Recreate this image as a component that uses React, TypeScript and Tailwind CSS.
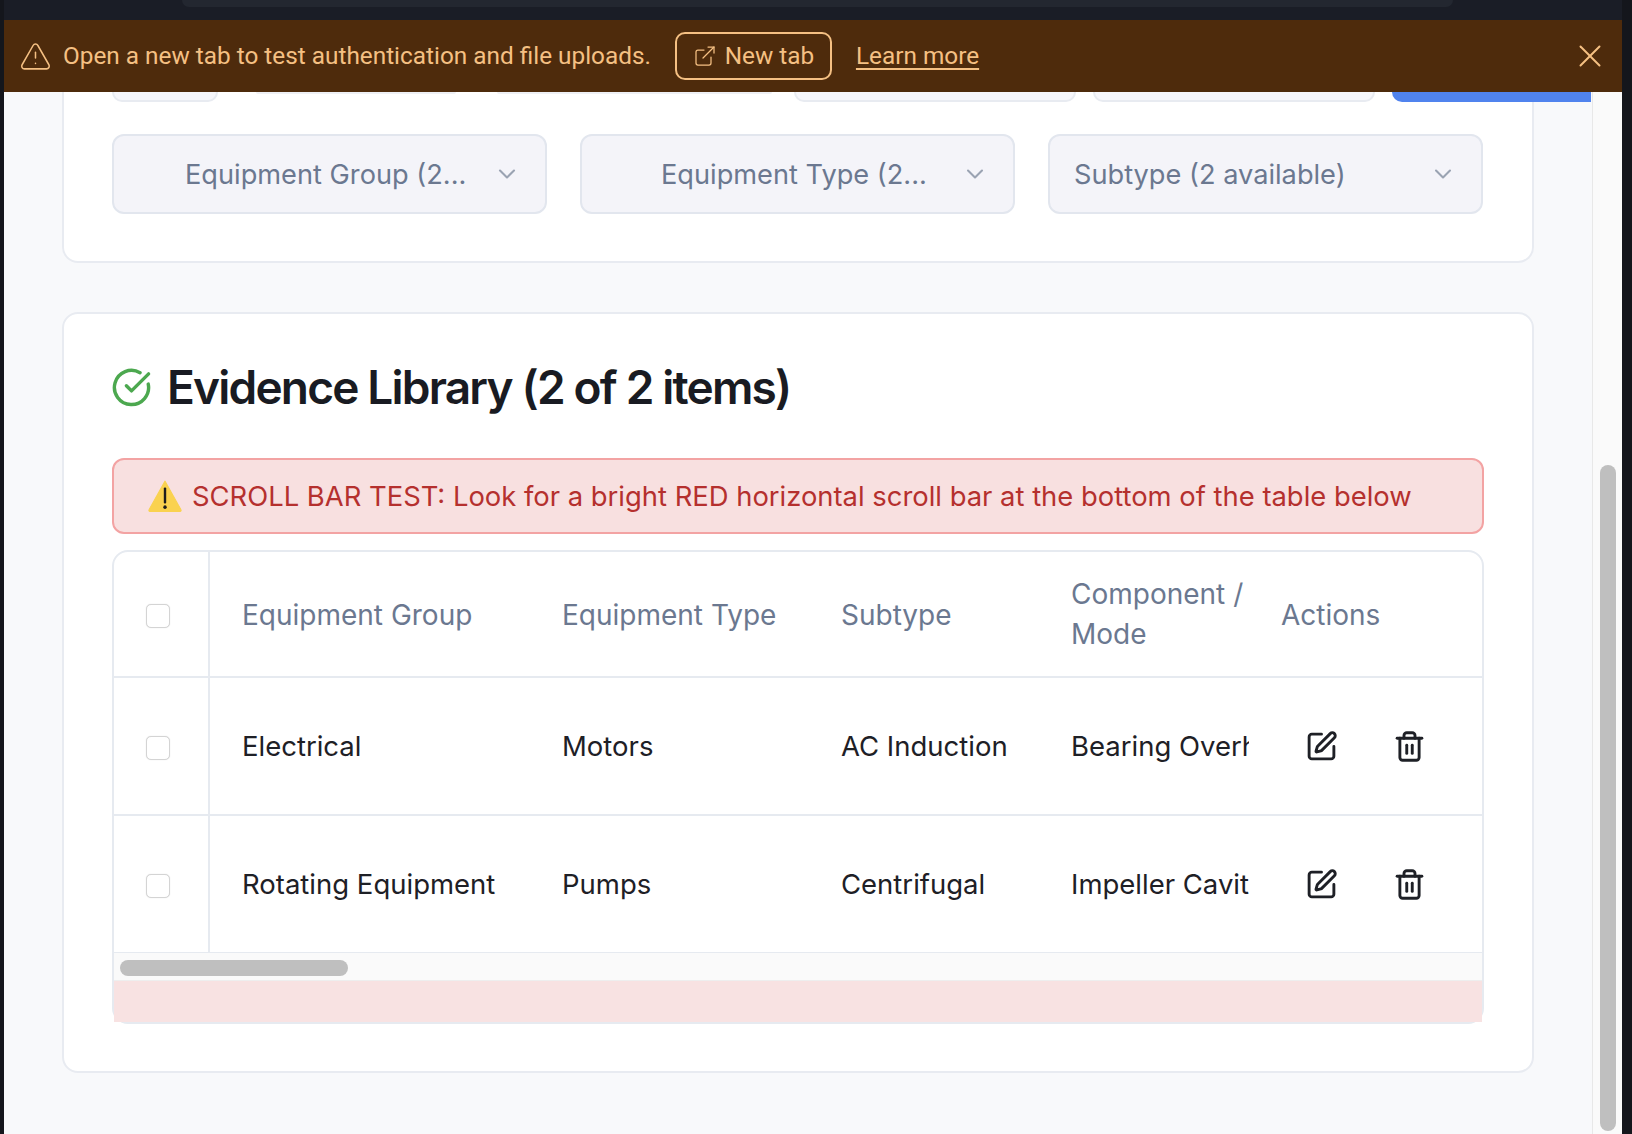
import { AlertTriangle, CircleCheckBig, ChevronDown, ExternalLink, SquarePen, Trash2, X } from 'lucide-react';

const rows = [
  { group: 'Electrical', type: 'Motors', subtype: 'AC Induction', mode: 'Bearing Overheating' },
  { group: 'Rotating Equipment', type: 'Pumps', subtype: 'Centrifugal', mode: 'Impeller Cavitation' },
];

function FilterSelect({ label, className }: { label: string; className: string }) {
  return (
    <div className={`flex h-[80px] items-center rounded-xl border-2 border-[#e2e6ee] bg-[#f4f4f9] pr-[24px] ${className}`}>
      <span className="flex-1 whitespace-nowrap pt-[2px] text-[27.2px] text-[#6b7890]">{label}</span>
      <ChevronDown size={28} strokeWidth={1.8} className="shrink-0 text-[#9aa3b2]" />
    </div>
  );
}

function Checkbox() {
  return <div className="ml-8 mt-1 h-6 w-6 rounded-[5px] border border-[#d4d4d4] bg-white shadow-[0_0_1px_#d4d4d4]" />;
}

export default function App() {
  return (
    <div className="flex h-[1134px] w-[1632px] overflow-hidden bg-[#14161c] font-['Inter',sans-serif]">
      <div className="ml-[4px] flex w-[1618px] flex-col">
        {/* Top bar */}
        <div className="h-5 shrink-0 bg-[#1a1d26] pl-[178px]">
          <div className="h-[7px] w-[1271px] rounded-b-lg bg-[#232730]" />
        </div>

        {/* Banner */}
        <div className="flex h-[72px] shrink-0 items-center bg-[#4e2b0c] pl-[15px] pr-[13px] font-['Roboto',sans-serif] text-[24.35px] text-[#f5c083]">
          <AlertTriangle size={33} strokeWidth={1.1} />
          <span className="ml-[11px]">Open a new tab to test authentication and file uploads.</span>
          <button className="ml-[24px] flex h-[48px] w-[157px] items-center justify-center gap-2 rounded-[10px] border-2 border-[#f5c083]">
            <ExternalLink size={24} strokeWidth={1.25} />
            New tab
          </button>
          <a className="ml-[24px] underline underline-offset-4">Learn more</a>
          <X size={38} strokeWidth={1.25} className="ml-auto" />
        </div>

        <div className="flex min-h-0 flex-1">
          {/* Page */}
          <div className="w-[1588px] overflow-hidden bg-[#f8f9fb] pl-[58px]">
            <div className="w-[1472px] rounded-b-2xl border-2 border-t-0 border-[#e8ebf1] bg-white px-[48px]">
              <div className="flex h-[10px] gap-[17px]">
                <div className="w-[106px] rounded-b-xl border-2 border-t-0 border-[#e8ebf1] bg-[#f7f7fb]" />
                <div className="ml-[21px] h-[2px] w-[200px] rounded-b-xl bg-[#eef0f5]" />
                <div className="ml-[24px] h-[2px] w-[275px] rounded-b-xl bg-[#eef0f5]" />
                <div className="ml-[5px] w-[282px] rounded-b-xl border-2 border-t-0 border-[#e8ebf1] bg-[#f7f7fb]" />
                <div className="w-[282px] rounded-b-xl border-2 border-t-0 border-[#e8ebf1] bg-[#f7f7fb]" />
                <div className="-mr-[110px] w-[199px] shrink-0 rounded-bl-xl bg-[#5083ee]" />
              </div>
              <div className="mt-[32px] mb-[47px] grid grid-cols-[435px_435px_435px] gap-[33px]">
                <FilterSelect label="Equipment Group (2..." className="pl-[71px]" />
                <FilterSelect label="Equipment Type (2..." className="pl-[79px]" />
                <FilterSelect label="Subtype (2 available)" className="pl-[24px]" />
              </div>
            </div>

            <div className="mt-[49px] h-[761px] w-[1472px] rounded-2xl border-2 border-[#e8ebf1] bg-white px-[48px]">
              <div className="mt-[39px] flex h-[68px] items-center gap-[15px]">
                <CircleCheckBig size={41} strokeWidth={2} className="-ml-px text-[#4ca84f]" />
                <h2 className="text-[46px] font-semibold tracking-[-1.8px] text-[#191b22]">Evidence Library (2 of 2 items)</h2>
              </div>

              <div className="mt-[37px] flex h-[76px] items-center gap-[9px] rounded-xl border-2 border-[#f3a3a3] bg-[#f8e0e0] pl-[33px] text-[27.4px] text-[#b5302e]">
                <svg width="36" height="34" viewBox="0 0 36 32" preserveAspectRatio="none" className="shrink-0">
                  <path d="M18 2 L34 29 Q34.500 30.500 33 30.500 L3 30.500 Q1.500 30.500 2 29 Z" fill="#fad24f" stroke="#fad24f" strokeWidth="1" strokeLinejoin="round" />
                  <rect x="16.800" y="8" width="2.400" height="15" rx="1" fill="#1d1d1d" />
                  <circle cx="18" cy="26.500" r="1.700" fill="#1d1d1d" />
                </svg>
                <span className="pt-[2px]">SCROLL BAR TEST: Look for a bright RED horizontal scroll bar at the bottom of the table below</span>
              </div>

              <div className="mt-[16px] h-[474px] rounded-2xl border-2 border-[#e6eaf0]">
                <div className="h-[401px] overflow-hidden rounded-t-2xl">
                  <table className="w-full table-fixed border-collapse text-left text-[27.5px]">
                    <colgroup>
                      <col className="w-[95px]" />
                      <col className="w-[321px]" />
                      <col className="w-[279px]" />
                      <col className="w-[230px]" />
                      <col className="w-[210px]" />
                      <col />
                    </colgroup>
                    <thead>
                      <tr className="h-[125px] border-b-2 border-[#e6eaf0] text-[28px] text-[#6b7890]">
                        <th className="border-r-2 border-[#e6eaf0] font-normal"><Checkbox /></th>
                        <th className="pl-8 pt-[2px] font-normal">Equipment Group</th>
                        <th className="pl-8 pt-[2px] font-normal">Equipment Type</th>
                        <th className="pl-8 pt-[2px] font-normal">Subtype</th>
                        <th className="pl-8 font-normal leading-[40px]">Component / Mode</th>
                        <th className="pl-8 pt-[2px] font-normal">Actions</th>
                      </tr>
                    </thead>
                    <tbody className="text-[#1e2026]">
                      {rows.map((row) => (
                        <tr key={row.group} className="h-[138px] border-b-2 border-[#e6eaf0]">
                          <td className="border-r-2 border-[#e6eaf0]"><Checkbox /></td>
                          <td className="pl-8 pt-[2px] whitespace-nowrap">{row.group}</td>
                          <td className="pl-8 pt-[2px] whitespace-nowrap">{row.type}</td>
                          <td className="pl-8 pt-[2px] whitespace-nowrap">{row.subtype}</td>
                          <td className="overflow-hidden whitespace-nowrap pl-8 pt-[2px]">{row.mode}</td>
                          <td className="pl-[56px]">
                            <div className="flex items-center gap-[55px]">
                              <SquarePen size={33} strokeWidth={2.1} />
                              <Trash2 size={33} strokeWidth={2.1} />
                            </div>
                          </td>
                        </tr>
                      ))}
                    </tbody>
                  </table>
                </div>
                {/* Table scroll bar */}
                <div className="h-[28px] border-b border-[#eeeeee] bg-[#fafafa] pl-[6px] pt-[7px]">
                  <div className="h-4 w-[228px] rounded-full bg-[#bfbfbf]" />
                </div>
                <div className="h-[41px] bg-[#f8e2e2]" />
              </div>
            </div>
          </div>

          {/* Page scroll bar */}
          <div className="flex-1 border-l border-[#e8e8e8] bg-[#fafafa] pl-[7px] pt-[373px]">
            <div className="h-[666px] w-4 rounded-full bg-[#bfbfbf]" />
          </div>
        </div>
      </div>
    </div>
  );
}
